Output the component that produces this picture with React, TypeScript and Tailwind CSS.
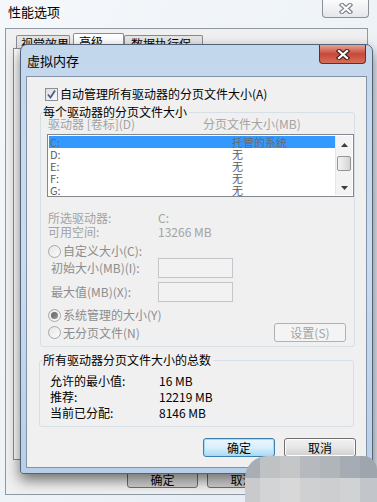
import type { ReactNode } from "react";

function CloseGlyph({ light }: { light?: boolean }) {
  return (
    <svg width="14" height="11" viewBox="0 0 14 11">
      <path
        d="M3 2 L11 9 M11 2 L3 9"
        stroke={light ? "#7b818a" : "#3b2622"}
        strokeWidth="4.4"
        strokeLinecap="square"
        fill="none"
      />
      <path
        d="M3 2 L11 9 M11 2 L3 9"
        stroke="#ffffff"
        strokeWidth="2.2"
        strokeLinecap="square"
        fill="none"
      />
    </svg>
  );
}

function Radio({ checked }: { checked?: boolean }) {
  return (
    <span className="flex h-[13px] w-[13px] items-center justify-center rounded-full border border-[#a7a7a7] bg-gradient-to-br from-[#e6e6e6] to-[#fbfbfb]">
      {checked && (
        <span className="h-[7px] w-[7px] rounded-full bg-gradient-to-br from-[#5f5f5f] to-[#9a9a9a]" />
      )}
    </span>
  );
}

function Group({
  legend,
  legendLeft,
  className,
  children,
}: {
  legend: string;
  legendLeft: string;
  className: string;
  children: ReactNode;
}) {
  return (
    <div className={`relative rounded-[3px] border border-[#d5dfe5] ${className}`}>
      <span className={`absolute -top-[8px] ${legendLeft} bg-[#f0f0f0] pr-[2px] text-black`}>
        {legend}
      </span>
      {children}
    </div>
  );
}

const drives = [
  { d: "C:", size: "托管的系统" },
  { d: "D:", size: "无" },
  { d: "E:", size: "无" },
  { d: "F:", size: "无" },
  { d: "G:", size: "无" },
];

function DriveList() {
  return (
    <div className="ml-[6px] mt-[3px] flex h-[63px] w-[307px] border border-[#828790] bg-white p-[1px]">
      <div className="flex-1 text-[11px]">
        {drives.map((row, i) => (
          <div
            key={row.d}
            className={`flex h-[12px] items-center leading-[12px] ${
              i === 0 ? "bg-[#3399ff] text-[#6f6a66]" : "text-[#5c5c5c]"
            }`}
          >
            <span className="w-[183px] pl-[1px]">{row.d}</span>
            <span>{row.size}</span>
          </div>
        ))}
      </div>
      <div className="flex w-[17px] flex-col border-l border-[#e6e6e6] bg-[#f3f3f3]">
        <div className="flex h-[18px] items-center justify-center">
          <svg width="7" height="4" viewBox="0 0 7 4">
            <polygon points="3.5,0 7,4 0,4" fill="#3c3c3c" />
          </svg>
        </div>
        <div className="mx-[1px] mt-[2px] h-[15px] rounded-[2px] border border-[#959595] bg-gradient-to-r from-[#f2f2f2] via-[#e6e6e6] to-[#d2d2d2]" />
        <div className="flex-1" />
        <div className="flex h-[14px] items-center justify-center">
          <svg width="7" height="4" viewBox="0 0 7 4">
            <polygon points="0,0 7,0 3.5,4" fill="#3c3c3c" />
          </svg>
        </div>
      </div>
    </div>
  );
}

function VirtualMemoryDialog() {
  return (
    <div className="absolute left-[20px] top-[44px] h-[430px] w-[353px] rounded-t-[7px] rounded-b-[3px] border border-[#53647a] bg-gradient-to-b from-[#c3d7ec] via-[#cadcef] to-[#b7cfe8] shadow-[0_6px_14px_rgba(0,0,0,0.55)]">
      <div className="relative flex h-[31px] items-center pl-[6px] text-[13px] text-black">
        虚拟内存
        <div className="absolute right-[6px] top-0 flex h-[19px] w-[47px] items-center justify-center rounded-b-[4px] border border-t-0 border-[#6b2b23] bg-gradient-to-b from-[#e6a194] via-[#c7483a] to-[#d86e58]">
          <CloseGlyph />
        </div>
      </div>

      <div className="mx-[5px] flex h-[392px] flex-col border border-[#8293a8] bg-[#f0f0f0] pt-[10px]">
        <div className="flex h-[14px] items-center">
          <span className="ml-[18px] flex h-[13px] w-[13px] items-center justify-center border border-[#8e8f8f] bg-gradient-to-br from-[#dcdcdc] to-[#fbfbfb]">
            <svg width="11" height="11" viewBox="0 0 11 11">
              <path d="M2 5.5 L4.5 8.5 L9 1.5" stroke="#4b5f8a" strokeWidth="1.8" fill="none" />
            </svg>
          </span>
          <span className="ml-[2px]">自动管理所有驱动器的分页文件大小(A)</span>
        </div>

        <Group
          legend="每个驱动器的分页文件大小"
          legendLeft="left-[2px]"
          className="ml-[13px] mt-[11px] h-[235px] w-[315px] pt-[4px]"
        >
          <div className="flex h-[14px] text-[#a3a3a3]">
            <span className="ml-[7px] w-[155px]">驱动器 [卷标](D)</span>
            <span>分页文件大小(MB)</span>
          </div>
          <DriveList />

          <div className="mt-[14px] flex h-[14px] text-[#a3a3a3]">
            <span className="ml-[7px] w-[110px]">所选驱动器:</span>
            <span>C:</span>
          </div>
          <div className="flex h-[14px] text-[#a3a3a3]">
            <span className="ml-[7px] w-[110px]">可用空间:</span>
            <span>13266 MB</span>
          </div>

          <div className="mt-[5px] flex h-[14px] items-center text-[#8d8d8d]">
            <span className="ml-[7px]">
              <Radio />
            </span>
            <span className="ml-[2px]">自定义大小(C):</span>
          </div>
          <div className="flex h-[20px] items-center text-[#8d8d8d]">
            <span className="ml-[10px] w-[107px]">初始大小(MB)(I):</span>
            <span className="h-[20px] w-[75px] border border-[#c3c6ca] bg-[#f2f2f2]" />
          </div>
          <div className="mt-[4px] flex h-[20px] items-center text-[#8d8d8d]">
            <span className="ml-[10px] w-[107px]">最大值(MB)(X):</span>
            <span className="h-[20px] w-[75px] border border-[#c3c6ca] bg-[#f2f2f2]" />
          </div>

          <div className="mt-[6px] flex h-[14px] items-center text-[#8d8d8d]">
            <span className="ml-[7px]">
              <Radio checked />
            </span>
            <span className="ml-[2px]">系统管理的大小(Y)</span>
          </div>
          <div className="mt-[1px] flex h-[19px] items-center justify-between pr-[8px] text-[#8d8d8d]">
            <div className="flex items-center">
              <span className="ml-[7px]">
                <Radio />
              </span>
              <span className="ml-[2px]">无分页文件(N)</span>
            </div>
            <span className="flex h-[19px] w-[72px] items-center justify-center rounded-[3px] border border-[#adb2b5] bg-[#f4f4f4] text-[#a3a3a3]">
              设置(S)
            </span>
          </div>
        </Group>

        <Group
          legend="所有驱动器分页文件大小的总数"
          legendLeft="left-[3px]"
          className="ml-[12px] mt-[13px] h-[67px] w-[315px] pt-[12px]"
        >
          {[
            ["允许的最小值:", "16 MB"],
            ["推荐:", "12219 MB"],
            ["当前已分配:", "8146 MB"],
          ].map(([k, v]) => (
            <div key={k} className="flex h-[16px] items-center">
              <span className="ml-[10px] w-[109px]">{k}</span>
              <span>{v}</span>
            </div>
          ))}
        </Group>

        <div className="mt-[11px] flex">
          <span className="ml-[176px] flex h-[19px] w-[72px] items-center justify-center rounded-[3px] border border-[#3c7fb1] bg-gradient-to-b from-[#eaf6fd] via-[#d9f0fc] to-[#a7d9f5] shadow-[inset_0_0_0_1px_#9fdcf6]">
            确定
          </span>
          <span className="ml-[9px] flex h-[19px] w-[72px] items-center justify-center rounded-[3px] border border-[#707070] bg-gradient-to-b from-[#f2f2f2] via-[#e6e6e6] to-[#cfcfcf] shadow-[inset_0_0_0_1px_#fcfcfc]">
            取消
          </span>
        </div>
      </div>
    </div>
  );
}

function OuterWindow() {
  return (
    <div className="flex h-full flex-col bg-gradient-to-br from-[#f5f8fb] via-[#eef3f8] to-[#e2eaf3]">
      <div className="flex h-[28px] items-start justify-between">
        <span className="ml-[8px] mt-[5px] text-[13px]">性能选项</span>
        <div className="mr-[8px] flex h-[18px] w-[47px] items-center justify-center rounded-b-[4px] border border-t-0 border-[#8c9199] bg-gradient-to-b from-[#fbfbfc] to-[#e4e7eb]">
          <CloseGlyph light />
        </div>
      </div>
      <div className="mb-[7px] ml-[5px] mr-[9px] flex flex-1 flex-col border border-[#8e99a6] bg-[#f0f0f0]">
        <div className="flex h-[19px] items-end pl-[10px]">
          <span className="h-[13px] w-[54px] rounded-t-[2px] border border-b-0 border-[#898c95] bg-[#e6e6e6] pl-[4px] leading-[16px]">
            视觉效果
          </span>
          <span className="ml-[3px] h-[15px] w-[51px] rounded-t-[2px] border border-b-0 border-[#898c95] bg-white pl-[5px] leading-[16px]">
            高级
          </span>
          <span className="h-[13px] w-[79px] rounded-t-[2px] border border-b-0 border-[#898c95] bg-[#e6e6e6] pl-[6px] leading-[16px]">
            数据执行保护
          </span>
        </div>
        <div className="ml-[7px] mr-[3px] h-[412px] border border-[#898c95] bg-white" />
        <div className="mt-[11px] flex">
          <span className="ml-[121px] flex h-[17px] w-[71px] items-center justify-center rounded-[3px] border border-[#707070] bg-gradient-to-b from-[#f2f2f2] to-[#cfcfcf]">
            确定
          </span>
          <span className="ml-[9px] flex h-[17px] w-[71px] items-center justify-center rounded-[3px] border border-[#707070] bg-gradient-to-b from-[#f2f2f2] to-[#cfcfcf]">
            取消
          </span>
        </div>
      </div>
    </div>
  );
}

const mosaic = [
  ["#a9aeb4", "#bfc2c5", "#c4c6c8", "#b6babe", "#b0b5ba", "#a6acb3", "#9ea5ad"],
  ["#c9cacc", "#d3d4d5", "#d8d8d9", "#cfd0d2", "#cdced0", "#d1d2d3", "#c2c5c9"],
];

function Mosaic() {
  return (
    <div className="absolute left-[245px] top-[456px] grid h-[46px] w-[132px] grid-cols-[15px_20px_20px_20px_20px_20px_17px] grid-rows-[22px_24px] overflow-hidden rounded-tl-[22px] rounded-tr-[14px]">
      {mosaic.flat().map((c, i) => (
        <div key={i} style={{ backgroundColor: c }} />
      ))}
    </div>
  );
}

export default function App() {
  return (
    <div className="relative h-[502px] w-[377px] overflow-hidden font-['Noto_Sans_CJK_SC',sans-serif] text-[12px] leading-[14px] text-black">
      <OuterWindow />
      <VirtualMemoryDialog />
      <Mosaic />
    </div>
  );
}
